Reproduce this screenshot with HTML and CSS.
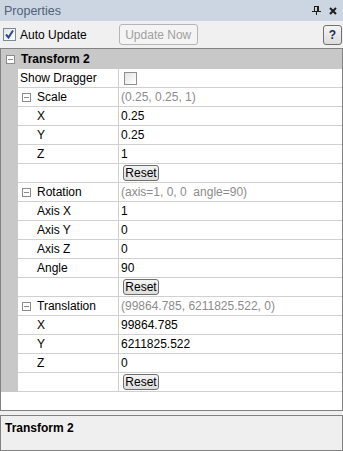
FILE: index.html
```html
<!DOCTYPE html>
<html lang="en">
<head>
    <meta charset="UTF-8">
    <meta name="viewport" content="width=device-width, initial-scale=1.0">
    <title>Properties</title>
    <link rel="stylesheet" href="styles.css">
</head>
<body>
    <div class="panel">
        <div class="titlebar">
            <span class="title">Properties</span>
            <span class="title-icons">
                <!-- pin -->
                <svg width="9" height="9" viewBox="0 0 9 9">
                    <rect x="2" y="0" width="5" height="1" fill="#1e1e1e"/>
                    <rect x="2" y="0" width="1" height="5" fill="#1e1e1e"/>
                    <rect x="5" y="0" width="2" height="5" fill="#1e1e1e"/>
                    <rect x="0" y="5" width="9" height="1" fill="#1e1e1e"/>
                    <rect x="4" y="6" width="1" height="3" fill="#1e1e1e"/>
                </svg>
                <!-- close -->
                <svg width="8" height="8" viewBox="0 0 8 8">
                    <path d="M1 1L7 7M7 1L1 7" stroke="#1e1e1e" stroke-width="2"/>
                </svg>
            </span>
        </div>

        <div class="toolbar">
            <span class="check">
                <svg width="11" height="11" viewBox="0 0 11 11">
                    <path d="M2 5.5L4.5 8.5L9 1.5" fill="none" stroke="#2d4a8c" stroke-width="2"/>
                </svg>
            </span>
            <span class="auto-label">Auto Update</span>
            <button class="btn-update" disabled>Update Now</button>
            <button class="btn-help">?</button>
        </div>

        <div class="grid">
            <div class="category"><span class="toggle"></span>Transform 2</div>
            <div class="props">
                <div class="gutter"></div>
                <div class="rows">
                    <div class="row"><div class="name">Show Dragger</div><div class="value"><span class="check small"></span></div></div>

                    <div class="row"><div class="name sub"><span class="toggle"></span>Scale</div><div class="value summary">(0.25, 0.25, 1)</div></div>
                    <div class="row"><div class="name child">X</div><div class="value">0.25</div></div>
                    <div class="row"><div class="name child">Y</div><div class="value">0.25</div></div>
                    <div class="row"><div class="name child">Z</div><div class="value">1</div></div>
                    <div class="row"><div class="name child"></div><div class="value"><button class="btn-reset">Reset</button></div></div>

                    <div class="row"><div class="name sub"><span class="toggle"></span>Rotation</div><div class="value summary">(axis=1, 0, 0&nbsp; angle=90)</div></div>
                    <div class="row"><div class="name child">Axis X</div><div class="value">1</div></div>
                    <div class="row"><div class="name child">Axis Y</div><div class="value">0</div></div>
                    <div class="row"><div class="name child">Axis Z</div><div class="value">0</div></div>
                    <div class="row"><div class="name child">Angle</div><div class="value">90</div></div>
                    <div class="row"><div class="name child"></div><div class="value"><button class="btn-reset">Reset</button></div></div>

                    <div class="row"><div class="name sub"><span class="toggle"></span>Translation</div><div class="value summary">(99864.785, 6211825.522, 0)</div></div>
                    <div class="row"><div class="name child">X</div><div class="value">99864.785</div></div>
                    <div class="row"><div class="name child">Y</div><div class="value">6211825.522</div></div>
                    <div class="row"><div class="name child">Z</div><div class="value">0</div></div>
                    <div class="row"><div class="name child"></div><div class="value"><button class="btn-reset">Reset</button></div></div>
                </div>
            </div>
        </div>

        <div class="desc">Transform 2</div>
    </div>
</body>
</html>
```

FILE: styles.css
```css
body {
    margin: 0;
    background-color: #f0f0f0;
    font-family: "Liberation Sans", Arial, sans-serif;
    font-size: 12px;
    color: #000;
}

.panel {
    width: 343px;
    height: 451px;
    display: flex;
    flex-direction: column;
}

/* Заголовок панели */
.titlebar {
    height: 21px;
    background-color: #cbd6e2;
    display: flex;
    align-items: center;
    padding: 0 6px 0 4px;
}

.title {
    flex: 1;
    color: #4f6379;
    font-size: 12.5px;
}

.title-icons {
    display: flex;
    align-items: center;
    gap: 8px;
}

/* Панель инструментов */
.toolbar {
    height: 27px;
    display: flex;
    align-items: center;
    padding: 0 1px 0 3px;
}

.check {
    width: 11px;
    height: 11px;
    border: 1px solid #7b8a9a;
    background: linear-gradient(135deg, #e4e4e4, #ffffff);
    display: inline-block;
    flex: none;
}

.check svg {
    display: block;
}

.auto-label {
    margin-left: 4px;
}

.btn-update {
    margin-left: 32px;
    height: 21px;
    width: 79px;
    padding: 0;
    border: 1px solid #b5b5b5;
    border-radius: 3px;
    background-color: #f4f4f4;
    color: #a0a0a0;
    font-family: inherit;
    font-size: 12px;
}

.btn-help {
    margin-left: auto;
    width: 19px;
    height: 20px;
    padding: 0;
    border: 1px solid #707070;
    border-radius: 3px;
    background: linear-gradient(#f4f4f4, #dcdcdc);
    color: #1a2a5a;
    font-family: inherit;
    font-weight: bold;
    font-size: 12px;
}

/* Сетка свойств */
.grid {
    height: 361px;
    border: 1px solid #828282;
    background-color: #fff;
    overflow: hidden;
}

.category {
    height: 20px;
    line-height: 20px;
    background-color: #c8c8c8;
    font-weight: bold;
    display: flex;
    align-items: center;
    padding-left: 5px;
}

.toggle {
    width: 7px;
    height: 7px;
    border: 1px solid #8c8c8c;
    background: #fff linear-gradient(#8c8c8c, #8c8c8c) center / 5px 1px no-repeat;
    flex: none;
    margin-right: 6px;
}

.props {
    display: flex;
}

.gutter {
    width: 17px;
    background-color: #c8c8c8;
}

.rows {
    flex: 1;
}

.row {
    display: flex;
    height: 18px;
    border-bottom: 1px solid #d0d0d0;
    line-height: 18px;
}

.name {
    width: 100px;
    padding-left: 2px;
    box-sizing: border-box;
    display: flex;
    align-items: center;
}

.name.sub {
    padding-left: 4px;
}

.name.sub .toggle {
    margin-right: 6px;
}

.name.child {
    padding-left: 19px;
}

.value {
    flex: 1;
    border-left: 1px solid #d0d0d0;
    padding-left: 2px;
    display: flex;
    align-items: center;
    white-space: nowrap;
}

.value.summary {
    color: #8c8c8c;
}

.check.small {
    margin-left: 3px;
    border-color: #8e8f8f;
}

.btn-reset {
    margin-left: 2px;
    height: 16px;
    width: 36px;
    padding: 0;
    border: 1px solid #707070;
    border-radius: 3px;
    background: linear-gradient(#f4f4f4, #dddddd);
    font-family: inherit;
    font-size: 12px;
    line-height: 14px;
    color: #000;
}

/* Описание */
.desc {
    margin-top: 4px;
    height: 34px;
    border: 1px solid #828282;
    background-color: #efefef;
    font-weight: bold;
    padding: 5px 4px 0;
    box-sizing: content-box;
    height: 29px;
}
```
